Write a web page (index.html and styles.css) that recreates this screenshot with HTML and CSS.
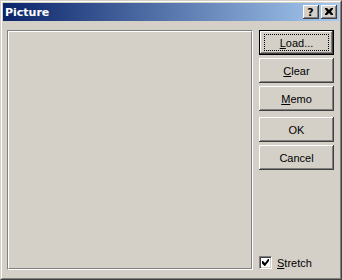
FILE: index.html
```html
<!DOCTYPE html>
<html lang="en">
<head>
    <meta charset="UTF-8">
    <title>Picture</title>
    <link rel="stylesheet" href="styles.css">
</head>
<body>
    <!-- Dialog window -->
    <div class="window">
        <div class="window-inner">
            <div class="titlebar">
                <span class="title">Picture</span>
                <div class="title-buttons">
                    <div class="tbtn"><span class="help">?</span></div>
                    <div class="tbtn">
                        <svg width="8" height="7" viewBox="0 0 8 7">
                            <path d="M0 0h2l2 2 2-2h2v1L6 3.5 8 6v1H6L4 5 2 7H0V6l2-2.5L0 1z" fill="#000"/>
                        </svg>
                    </div>
                </div>
            </div>

            <div class="content">
                <!-- Image area -->
                <div class="picture-frame">
                    <div class="picture"></div>
                </div>

                <!-- Buttons column -->
                <div class="side">
                    <div class="btn default"><span class="focus"><u>L</u>oad...</span></div>
                    <div class="btn"><span><u>C</u>lear</span></div>
                    <div class="btn"><span><u>M</u>emo</span></div>
                    <div class="btn spaced"><span>OK</span></div>
                    <div class="btn"><span>Cancel</span></div>

                    <label class="check">
                        <span class="box">
                            <svg width="7" height="7" viewBox="0 0 7 7">
                                <path d="M0 2h1l2 2 3-4h1v2L3 7H2.5L0 4.5z" fill="#000"/>
                            </svg>
                        </span>
                        <span><u>S</u>tretch</span>
                    </label>
                </div>
            </div>
        </div>
    </div>
</body>
</html>
```

FILE: styles.css
```css
body {
    margin: 0;
    background-color: #d4d0c8;
    font-family: 'Liberation Sans', Arial, sans-serif;
    font-size: 11px;
    color: #000;
}

/* Outer window frame */
.window {
    width: 342px;
    height: 280px;
    box-sizing: border-box;
    border: 1px solid;
    border-color: #d4d0c8 #404040 #404040 #d4d0c8;
    background-color: #d4d0c8;
}

.window-inner {
    height: 100%;
    box-sizing: border-box;
    border: 1px solid;
    border-color: #fff #808080 #808080 #fff;
    padding: 1px;
    display: flex;
    flex-direction: column;
}

.titlebar {
    height: 18px;
    display: flex;
    align-items: center;
    justify-content: space-between;
    background: linear-gradient(to right, #0a246a, #a6caf0);
    padding: 0 2px;
}

.title {
    color: #fff;
    font-family: 'DejaVu Sans', sans-serif;
    font-weight: bold;
    font-size: 11px;
    letter-spacing: 0;
}

.title-buttons {
    display: flex;
    gap: 2px;
}

.tbtn {
    width: 16px;
    height: 14px;
    box-sizing: border-box;
    background-color: #d4d0c8;
    box-shadow: inset -1px -1px #404040, inset 1px 1px #fff, inset -2px -2px #808080, inset 2px 2px #d4d0c8;
    display: flex;
    align-items: center;
    justify-content: center;
}

.tbtn svg {
    margin-left: -1px;
    margin-top: -1px;
}

.help {
    font-family: 'DejaVu Sans', sans-serif;
    font-weight: bold;
    font-size: 11px;
    line-height: 11px;
    margin-left: -1px;
}

.content {
    flex: 1;
    display: flex;
    padding: 9px 5px 7px 4px;
    gap: 6px;
}

/* Etched frame around image */
.picture-frame {
    width: 246px;
    box-sizing: border-box;
    border: 1px solid;
    border-color: #808080 #fff #fff #808080;
}

.picture {
    height: 100%;
    box-sizing: border-box;
    border: 1px solid;
    border-color: #fff #808080 #808080 #fff;
}

.side {
    width: 75px;
    display: flex;
    flex-direction: column;
    gap: 3px;
}

.btn {
    height: 25px;
    box-sizing: border-box;
    box-shadow: inset -1px -1px #404040, inset 1px 1px #fff, inset -2px -2px #808080, inset 2px 2px #d4d0c8;
    display: flex;
    align-items: center;
    justify-content: center;
}

.btn.spaced {
    margin-top: 3px;
}

.btn.default {
    border: 1px solid #000;
}

.btn .focus {
    display: flex;
    align-items: center;
    justify-content: center;
    width: 63px;
    height: 15px;
    outline: 1px dotted #000;
}

.check {
    margin-top: auto;
    margin-bottom: 1px;
    display: flex;
    align-items: center;
    gap: 5px;
}

.box {
    width: 13px;
    height: 13px;
    box-sizing: border-box;
    background-color: #fff;
    border: 1px solid;
    border-color: #808080 #fff #fff #808080;
    box-shadow: inset 1px 1px #404040, inset -1px -1px #d4d0c8;
    display: flex;
    align-items: center;
    justify-content: center;
}
```
